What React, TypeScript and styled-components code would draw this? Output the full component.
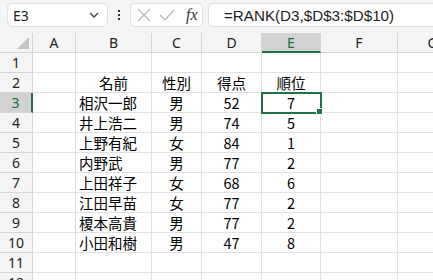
import React from 'react'
import styled, { createGlobalStyle } from 'styled-components'

const GlobalStyle = createGlobalStyle`
  html, body {
    margin: 0;
    padding: 0;
    background: #ffffff;
    overflow: hidden;
  }
  body {
    font-family: "Noto Sans", "Noto Sans CJK JP", sans-serif;
  }
`

const COLS = ['A', 'B', 'C', 'D', 'E', 'F', 'G']
const DATA = [
  ['相沢一郎', '男', '52', '7'],
  ['井上浩二', '男', '74', '5'],
  ['上野有紀', '女', '84', '1'],
  ['内野武', '男', '77', '2'],
  ['上田祥子', '女', '68', '6'],
  ['江田早苗', '女', '77', '2'],
  ['榎本高貴', '男', '77', '2'],
  ['小田和樹', '男', '47', '8'],
]

export default function App() {
  const rows: string[][] = []
  rows.push(['', '', '', '', '', '', ''])
  rows.push(['', '名前', '性別', '得点', '順位', '', ''])
  DATA.forEach(r => rows.push(['', r[0], r[1], r[2], r[3], '', '']))
  rows.push(['', '', '', '', '', '', ''])
  rows.push(['', '', '', '', '', '', ''])

  return (
    <Page>
      <GlobalStyle />
      <Toolbar>
        <NameBox>
          <NameText>E3</NameText>
          <svg width="12" height="8" viewBox="0 0 12 8">
            <path d="M2 2 L6 6 L10 2" fill="none" stroke="#444" strokeWidth="1.3" />
          </svg>
        </NameBox>
        <Dots>
          <span />
          <span />
          <span />
        </Dots>
        <FxBox>
          <svg width="16" height="16" viewBox="0 0 16 16">
            <path d="M2 2 L14 14 M14 2 L2 14" stroke="#b8b8b8" strokeWidth="1.2" />
          </svg>
          <svg width="18" height="16" viewBox="0 0 18 16">
            <path d="M2 8 L7 13 L16 3" fill="none" stroke="#b8b8b8" strokeWidth="1.2" />
          </svg>
          <FxLabel>fx</FxLabel>
        </FxBox>
        <FormulaBox>=RANK(D3,$D$3:$D$10)</FormulaBox>
      </Toolbar>
      <Sheet>
        <Corner>
          <svg width="12" height="12" viewBox="0 0 12 12">
            <path d="M12 0 L12 12 L0 12 Z" fill="#c4c4c4" />
          </svg>
        </Corner>
        {COLS.map(c => (
          <ColHead key={c} $active={c === 'E'}>{c}</ColHead>
        ))}
        {rows.map((r, i) => (
          <React.Fragment key={i}>
            <RowHead $active={i === 2}>{i + 1}</RowHead>
            {r.map((v, j) => (
              <Cell key={j} $align={j === 1 && i > 1 ? 'left' : 'center'} $selected={i === 2 && j === 4}>
                {v}
                {i === 2 && j === 4 && <Handle />}
              </Cell>
            ))}
          </React.Fragment>
        ))}
      </Sheet>
    </Page>
  )
}

const Page = styled.div`
  width: 433px;
  height: 280px;
  overflow: hidden;
  background: #ffffff;
`

const Toolbar = styled.div`
  height: 33px;
  box-sizing: border-box;
  background: #f5f5f5;
  display: flex;
  align-items: flex-start;
  padding: 3px 0 0 7px;
`

const NameBox = styled.div`
  width: 101px;
  height: 24px;
  box-sizing: border-box;
  background: #ffffff;
  border: 1px solid #e0e0e0;
  border-radius: 5px;
  display: flex;
  align-items: center;
  justify-content: space-between;
  padding: 0 7px 0 5px;
`

const NameText = styled.span`
  font-family: "Noto Sans", sans-serif;
  font-size: 14px;
  color: #222;
`

const Dots = styled.div`
  width: 22px;
  height: 24px;
  display: flex;
  flex-direction: column;
  align-items: center;
  justify-content: center;
  gap: 2px;
  span {
    width: 2px;
    height: 2px;
    background: #333;
  }
`

const FxBox = styled.div`
  width: 73px;
  height: 24px;
  box-sizing: border-box;
  background: #ffffff;
  border: 1px solid #e0e0e0;
  border-radius: 5px;
  display: flex;
  align-items: center;
  gap: 6px;
  padding: 0 4px 0 5px;
`

const FxLabel = styled.span`
  font-family: "Liberation Serif", serif;
  font-style: italic;
  font-size: 16px;
  color: #333;
  margin-left: 4px;
  line-height: 1;
`

const FormulaBox = styled.div`
  flex: 1;
  height: 24px;
  margin-left: 5px;
  box-sizing: border-box;
  background: #ffffff;
  border: 1px solid #e0e0e0;
  border-right: none;
  border-radius: 5px 0 0 5px;
  padding-left: 15px;
  display: flex;
  align-items: center;
  font-family: "Liberation Sans", sans-serif;
  font-size: 15.2px;
  color: #222;
`

const Sheet = styled.div`
  display: grid;
  grid-template-columns: 33px 43px 76px 50px 60px 59px 77px 70px;
  grid-auto-rows: 20px;
`

const Corner = styled.div`
  background: #f5f5f5;
  border-right: 1px solid #d6d6d6;
  border-bottom: 1px solid #d6d6d6;
  box-sizing: border-box;
  display: flex;
  align-items: flex-end;
  justify-content: flex-end;
  padding: 0 3px 3px 0;
`

const ColHead = styled.div<{ $active?: boolean }>`
  box-sizing: border-box;
  background: ${p => (p.$active ? '#d2d2d2' : '#f5f5f5')};
  border-right: 1px solid #d6d6d6;
  border-bottom: ${p => (p.$active ? '2px solid #217346' : '1px solid #d6d6d6')};
  color: ${p => (p.$active ? '#1e6b3f' : '#222')};
  font-family: "Noto Sans", sans-serif;
  font-size: 14px;
  display: flex;
  align-items: center;
  justify-content: center;
`

const RowHead = styled.div<{ $active?: boolean }>`
  box-sizing: border-box;
  background: ${p => (p.$active ? '#d2d2d2' : '#f5f5f5')};
  border-right: ${p => (p.$active ? '2px solid #217346' : '1px solid #d6d6d6')};
  border-bottom: 1px solid #d6d6d6;
  color: ${p => (p.$active ? '#1e6b3f' : '#222')};
  font-family: "Noto Sans", sans-serif;
  font-size: 14px;
  display: flex;
  align-items: center;
  justify-content: center;
`

const Cell = styled.div<{ $align: 'left' | 'center'; $selected?: boolean }>`
  position: relative;
  box-sizing: border-box;
  border-right: 1px solid #e1e1e1;
  border-bottom: 1px solid #e1e1e1;
  font-family: "Noto Sans CJK JP", sans-serif;
  font-size: 14.5px;
  color: #000000;
  display: flex;
  align-items: center;
  justify-content: ${p => (p.$align === 'left' ? 'flex-start' : 'center')};
  padding-left: ${p => (p.$align === 'left' ? '3px' : '0')};
  outline: ${p => (p.$selected ? '2px solid #217346' : 'none')};
  outline-offset: -1px;
  z-index: ${p => (p.$selected ? 1 : 0)};
`

const Handle = styled.span`
  position: absolute;
  right: -3px;
  bottom: -3px;
  width: 5px;
  height: 5px;
  background: #217346;
  border: 1px solid #ffffff;
`
